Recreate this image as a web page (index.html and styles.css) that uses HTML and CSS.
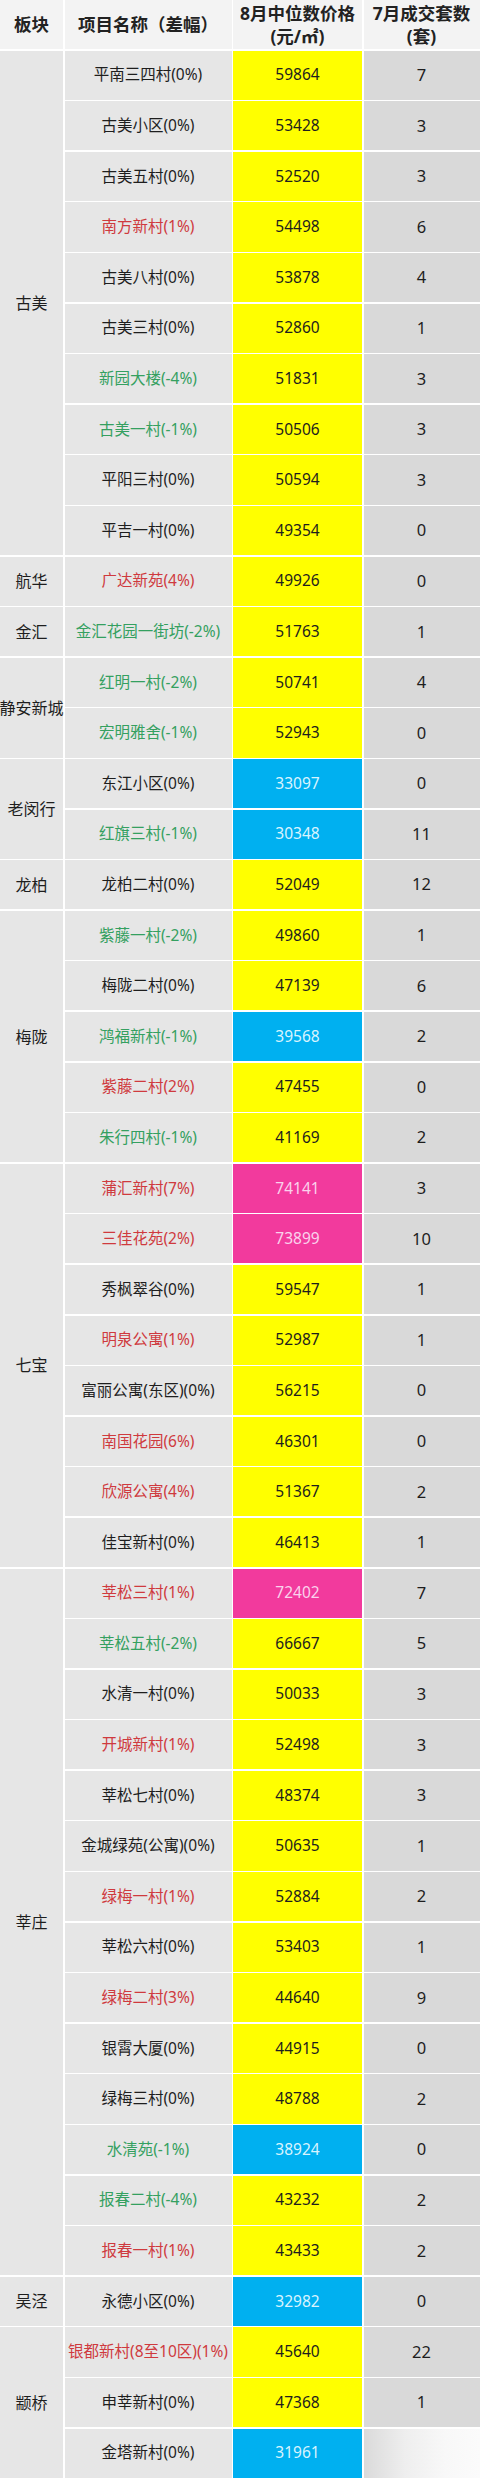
FILE: index.html
```html
<!DOCTYPE html>
<html lang="zh-CN">
<head>
<meta charset="utf-8">
<title>8月中位数价格</title>
<link rel="stylesheet" href="styles.css">
</head>
<body>
<div class="table">
  <div class="hd">板块</div>
  <div class="hd">项目名称（差幅）</div>
  <div class="hd two">8月中位数价格<br>(元/㎡)</div>
  <div class="hd two">7月成交套数<br>(套)</div>

  <div class="area span-10">古美</div>
  <div class="name">平南三四村(0%)</div><div class="price y">59864</div><div class="num">7</div>
  <div class="name">古美小区(0%)</div><div class="price y">53428</div><div class="num">3</div>
  <div class="name">古美五村(0%)</div><div class="price y">52520</div><div class="num">3</div>
  <div class="name up">南方新村(1%)</div><div class="price y">54498</div><div class="num">6</div>
  <div class="name">古美八村(0%)</div><div class="price y">53878</div><div class="num">4</div>
  <div class="name">古美三村(0%)</div><div class="price y">52860</div><div class="num">1</div>
  <div class="name down">新园大楼(-4%)</div><div class="price y">51831</div><div class="num">3</div>
  <div class="name down">古美一村(-1%)</div><div class="price y">50506</div><div class="num">3</div>
  <div class="name">平阳三村(0%)</div><div class="price y">50594</div><div class="num">3</div>
  <div class="name">平吉一村(0%)</div><div class="price y">49354</div><div class="num">0</div>

  <div class="area">航华</div>
  <div class="name up">广达新苑(4%)</div><div class="price y">49926</div><div class="num">0</div>

  <div class="area">金汇</div>
  <div class="name down">金汇花园一街坊(-2%)</div><div class="price y">51763</div><div class="num">1</div>

  <div class="area span-2">静安新城</div>
  <div class="name down">红明一村(-2%)</div><div class="price y">50741</div><div class="num">4</div>
  <div class="name down">宏明雅舍(-1%)</div><div class="price y">52943</div><div class="num">0</div>

  <div class="area span-2">老闵行</div>
  <div class="name">东江小区(0%)</div><div class="price b">33097</div><div class="num">0</div>
  <div class="name down">红旗三村(-1%)</div><div class="price b">30348</div><div class="num">11</div>

  <div class="area">龙柏</div>
  <div class="name">龙柏二村(0%)</div><div class="price y">52049</div><div class="num">12</div>

  <div class="area span-5">梅陇</div>
  <div class="name down">紫藤一村(-2%)</div><div class="price y">49860</div><div class="num">1</div>
  <div class="name">梅陇二村(0%)</div><div class="price y">47139</div><div class="num">6</div>
  <div class="name down">鸿福新村(-1%)</div><div class="price b">39568</div><div class="num">2</div>
  <div class="name up">紫藤二村(2%)</div><div class="price y">47455</div><div class="num">0</div>
  <div class="name down">朱行四村(-1%)</div><div class="price y">41169</div><div class="num">2</div>

  <div class="area span-8">七宝</div>
  <div class="name up">蒲汇新村(7%)</div><div class="price p">74141</div><div class="num">3</div>
  <div class="name up">三佳花苑(2%)</div><div class="price p">73899</div><div class="num">10</div>
  <div class="name">秀枫翠谷(0%)</div><div class="price y">59547</div><div class="num">1</div>
  <div class="name up">明泉公寓(1%)</div><div class="price y">52987</div><div class="num">1</div>
  <div class="name">富丽公寓(东区)(0%)</div><div class="price y">56215</div><div class="num">0</div>
  <div class="name up">南国花园(6%)</div><div class="price y">46301</div><div class="num">0</div>
  <div class="name up">欣源公寓(4%)</div><div class="price y">51367</div><div class="num">2</div>
  <div class="name">佳宝新村(0%)</div><div class="price y">46413</div><div class="num">1</div>

  <div class="area span-14">莘庄</div>
  <div class="name up">莘松三村(1%)</div><div class="price p">72402</div><div class="num">7</div>
  <div class="name down">莘松五村(-2%)</div><div class="price y">66667</div><div class="num">5</div>
  <div class="name">水清一村(0%)</div><div class="price y">50033</div><div class="num">3</div>
  <div class="name up">开城新村(1%)</div><div class="price y">52498</div><div class="num">3</div>
  <div class="name">莘松七村(0%)</div><div class="price y">48374</div><div class="num">3</div>
  <div class="name">金城绿苑(公寓)(0%)</div><div class="price y">50635</div><div class="num">1</div>
  <div class="name up">绿梅一村(1%)</div><div class="price y">52884</div><div class="num">2</div>
  <div class="name">莘松六村(0%)</div><div class="price y">53403</div><div class="num">1</div>
  <div class="name up">绿梅二村(3%)</div><div class="price y">44640</div><div class="num">9</div>
  <div class="name">银霄大厦(0%)</div><div class="price y">44915</div><div class="num">0</div>
  <div class="name">绿梅三村(0%)</div><div class="price y">48788</div><div class="num">2</div>
  <div class="name down">水清苑(-1%)</div><div class="price b">38924</div><div class="num">0</div>
  <div class="name down">报春二村(-4%)</div><div class="price y">43232</div><div class="num">2</div>
  <div class="name up">报春一村(1%)</div><div class="price y">43433</div><div class="num">2</div>

  <div class="area">吴泾</div>
  <div class="name">永德小区(0%)</div><div class="price b">32982</div><div class="num">0</div>

  <div class="area span-3">颛桥</div>
  <div class="name up">银都新村(8至10区)(1%)</div><div class="price y">45640</div><div class="num">22</div>
  <div class="name">申莘新村(0%)</div><div class="price y">47368</div><div class="num">1</div>
  <div class="name">金塔新村(0%)</div><div class="price b">31961</div><div class="num faded"></div>
</div>
</body>
</html>
```

FILE: styles.css
```css
html, body {
  margin: 0;
  padding: 0;
  background: #ffffff;
}

body {
  width: 480px;
  font-family: "Noto Sans", "Noto Sans CJK SC", sans-serif;
  color: #1e1e1e;
}

.table {
  display: grid;
  width: 478px;
  grid-template-columns: 63px 167px 129px 116px;
  grid-template-rows: 49.2px;
  grid-auto-rows: 49.1px;
  gap: 1.5px;
  background: #ffffff;
}

.table > div {
  display: flex;
  align-items: center;
  justify-content: center;
  text-align: center;
  white-space: nowrap;
  font-size: 15.5px;
  line-height: 1;
}

.hd {
  background: #f3f3f3;
  font-weight: 700;
  font-size: 17.5px !important;
  color: #222222;
}

.hd.two {
  line-height: 23px !important;
}

.area {
  background: #e6e6e6;
  font-size: 16px !important;
}

.span-2 { grid-row: span 2; }
.span-3 { grid-row: span 3; }
.span-5 { grid-row: span 5; }
.span-8 { grid-row: span 8; }
.span-10 { grid-row: span 10; }
.span-14 { grid-row: span 14; }

.name {
  background: #e6e6e6;
  overflow: visible;
}

.name.up {
  color: #cf3a3e;
}

.name.down {
  color: #34a060;
}

.price {
  font-size: 15.5px;
}

.price.y {
  background: #ffff00;
  color: #1e1e1e;
}

.price.b {
  background: #00b0f0;
  color: #d8f4ff;
}

.price.p {
  background: #f23a9d;
  color: #fad2ec;
}

.num {
  background: #d9d9d9;
  font-size: 16.5px !important;
}

.num.faded {
  background: linear-gradient(to right, #dadada 0%, #eeeeee 35%, #f8f8f8 70%, #fbfbfb 100%);
}
```
